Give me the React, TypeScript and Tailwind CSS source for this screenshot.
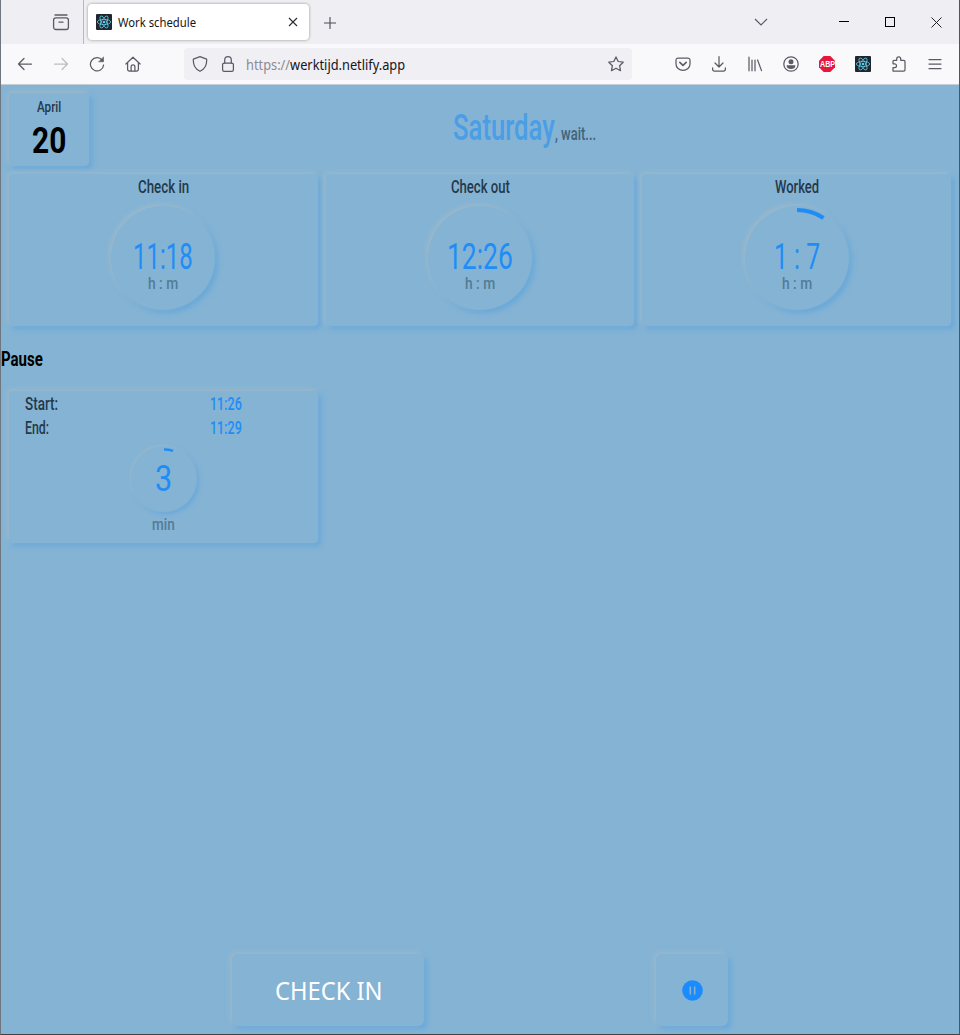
import { useLayoutEffect, useRef, useState } from "react";
import type { ReactNode } from "react";

/** One line of text, condensed or widened so that it fills a fixed width. */
function Fit({ width, className = "", children }: { width: number; className?: string; children: ReactNode }) {
  const ref = useRef<HTMLSpanElement>(null);
  const [scale, setScale] = useState(1);
  useLayoutEffect(() => {
    const fit = () => {
      if (ref.current && ref.current.offsetWidth) setScale(width / ref.current.offsetWidth);
    };
    fit();
    document.fonts?.ready.then(fit);
  }, [width]);
  return (
    <span className={`flex shrink-0 justify-start whitespace-nowrap ${className}`} style={{ width }}>
      <span ref={ref} className="block shrink-0 origin-left whitespace-pre" style={{ transform: `scaleX(${scale})` }}>
        {children}
      </span>
    </span>
  );
}

const soft = "shadow-[-2px_-2px_5px_#9bb9cb,3px_3px_5px_#68a8da]";
const softSmall = "shadow-[-1px_-1px_3px_#9bb9cb,2px_2px_4px_#68a8da]";

function ReactLogo() {
  return (
    <svg width="16" height="16" viewBox="0 0 16 16" className="shrink-0">
      <rect width="16" height="16" rx="1" fill="#20262d" />
      <g fill="none" stroke="#61cbea" strokeWidth="0.8">
        <ellipse cx="8" cy="8" rx="6.7" ry="2.6" />
        <ellipse cx="8" cy="8" rx="6.7" ry="2.6" transform="rotate(60 8 8)" />
        <ellipse cx="8" cy="8" rx="6.7" ry="2.6" transform="rotate(120 8 8)" />
      </g>
      <circle cx="8" cy="8" r="1.3" fill="#61cbea" />
    </svg>
  );
}

function Icon({ children, className = "text-[#5b5b66]" }: { children: ReactNode; className?: string }) {
  return (
    <svg
      width="16"
      height="16"
      viewBox="0 0 16 16"
      fill="none"
      stroke="currentColor"
      strokeWidth="1.25"
      strokeLinecap="round"
      strokeLinejoin="round"
      className={`shrink-0 ${className}`}
    >
      {children}
    </svg>
  );
}

function TabBar() {
  return (
    <div className="flex h-[44px] bg-[#efeef3]">
      <div className="flex w-[83px] items-center justify-end border-r border-[#b9b8bf] pr-[13px]">
        <svg width="18" height="18" viewBox="0 0 18 18" fill="none" stroke="#5b5b66" strokeWidth="1.3" strokeLinecap="round">
          <path d="M3 2h12" />
          <rect x="1.6" y="4.9" width="14.8" height="11.6" rx="2.2" />
          <path d="M7 9.2h4" />
        </svg>
      </div>
      <div className="mt-[4px] ml-[4px] flex h-[36px] w-[221px] items-center rounded-[4px] bg-white pl-[8px] shadow-[0_0_3px_rgba(0,0,0,0.4)]">
        <ReactLogo />
        <Fit width={78} className="mt-[2px] ml-[6px] font-['Noto_Sans'] text-[12px] leading-[16px] text-[#15141a]">
          Work schedule
        </Fit>
        <svg width="10" height="10" viewBox="0 0 10 10" stroke="#2b2a33" strokeWidth="1.1" className="ml-[92px]">
          <path d="M1 1l8 8M9 1L1 9" />
        </svg>
      </div>
      <svg width="12" height="12" viewBox="0 0 12 12" stroke="#4a4a55" strokeWidth="1.1" className="mt-[17px] ml-[15px]">
        <path d="M6 0v12M0 6h12" />
      </svg>
      <div className="ml-auto flex items-center pr-[16px]">
        <svg width="14" height="8" viewBox="0 0 14 8" fill="none" stroke="#5b5b66" strokeWidth="1.2" className="mr-[71px]">
          <path d="M1 1l6 6 6-6" />
        </svg>
        <svg width="10" height="10" viewBox="0 0 10 10" stroke="#000" className="mr-[36px]">
          <path d="M0 4.5h10" />
        </svg>
        <svg width="10" height="10" viewBox="0 0 10 10" fill="none" stroke="#000" className="mr-[36px]">
          <rect x="0.5" y="0.5" width="9" height="9" />
        </svg>
        <svg width="11" height="11" viewBox="0 0 11 11" stroke="#222" strokeWidth="1" className="mr-px">
          <path d="M.5 .5l10 10M10.5 .5l-10 10" />
        </svg>
      </div>
    </div>
  );
}

function ToolBar() {
  return (
    <div className="flex h-[40px] items-center bg-[#f9f9fb] pl-[16px]">
      <div className="flex gap-[20px]">
        <Icon>
          <path d="M14.5 8H1.5M7 2.5L1.5 8 7 13.5" />
        </Icon>
        <Icon className="text-[#bcbcc2]">
          <path d="M1.5 8h13M9 2.5L14.5 8 9 13.5" />
        </Icon>
        <Icon>
          <path d="M13.2 4.2A6.6 6.6 0 1 0 14.6 9" />
          <path d="M14.5 1.2v4.6H9.9z" fill="currentColor" strokeWidth="0.6" />
        </Icon>
        <Icon>
          <path d="M.9 8L8 1.2 15.1 8M2.6 6.6v6.6a1.8 1.8 0 0 0 1.8 1.8h7.2a1.8 1.8 0 0 0 1.8-1.8V6.6" />
          <path d="M6.1 14.8v-4a1.9 1.9 0 0 1 3.8 0v4" />
        </Icon>
      </div>
      <div className="ml-[43px] flex h-[32px] w-[448px] items-center rounded-[4px] bg-[#f0eff4] pl-[8px]">
        <Icon>
          <path d="M8 .7l6.6 2.4c.5 5.6-1.2 9.6-6.6 12.2C2.6 12.7.9 8.7 1.4 3.1z" />
        </Icon>
        <Icon className="ml-[12px] text-[#5b5b66]">
          <rect x="2.6" y="7" width="10.8" height="8.3" rx="1.6" />
          <path d="M4.7 7V4a3.3 3.3 0 0 1 6.6 0v3" />
        </Icon>
        <Fit width={159} className="mt-[2px] ml-[10px] font-['Noto_Sans'] text-[14px] leading-[20px] text-[#15141a]">
          <span className="text-[#8b8b93]">https://</span>werktijd.netlify.app
        </Fit>
        <Icon className="mr-[8px] ml-auto text-[#5b5b66]">
          <path d="M8 .9l2.2 4.6 5 .7-3.6 3.5.9 5L8 12.3l-4.5 2.4.9-5L.8 6.2l5-.7z" />
        </Icon>
      </div>
      <div className="ml-[43px] flex gap-[20px]">
        <Icon>
          <path d="M3.2 2h9.6a2.2 2.2 0 0 1 2.2 2.2V8A7 6.4 0 0 1 1 8V4.2A2.2 2.2 0 0 1 3.2 2z" />
          <path d="M4.8 6.3L8 9.3l3.2-3" strokeWidth="1.6" />
        </Icon>
        <Icon>
          <path d="M8 .7v10M4 7l4 4 4-4M1.600 11.8v1.4a1.8 1.8 0 0 0 1.8 1.8h9.2a1.8 1.8 0 0 0 1.8-1.8v-1.4" />
        </Icon>
        <Icon>
          <path d="M2 1.2v13.600M5 4v10.800M8 4v10.800M10.600 4l3.900 10.600" />
        </Icon>
        <Icon>
          <circle cx="8" cy="8" r="7.2" />
          <circle cx="8" cy="5.8" r="2.5" fill="currentColor" stroke="none" />
          <path d="M3.6 9.200h8.800a4.400 3.800 0 0 1-8.800 0z" fill="currentColor" stroke="none" />
        </Icon>
        <div className="relative h-[16px] w-[16px]">
          <svg width="16" height="16" viewBox="0 0 16 16">
            <path d="M4.700 0h6.600L16 4.700v6.600L11.300 16H4.700L0 11.300V4.700z" fill="#e5173f" />
          </svg>
          <div className="absolute inset-0 flex items-center justify-center">
            <Fit width={15} className="font-['Liberation_Sans'] text-[9px] leading-[9px] font-bold text-white">
              ABP
            </Fit>
          </div>
        </div>
        <ReactLogo />
        <Icon>
          <path d="M2 15V11.600h1.600a1.900 1.900 0 0 0 0-3.800H2V5.400a1 1 0 0 1 1-1h2.700V2.900a2 2 0 0 1 4 0v1.500h3a1.300 1.300 0 0 1 1.300 1.300v8a1.300 1.300 0 0 1-1.300 1.300z" />
        </Icon>
        <Icon>
          <path d="M2 3.500h12M2 8h12M2 12.500h12" />
        </Icon>
      </div>
    </div>
  );
}

function TimeCard({ title, titleWidth, value, valueWidth, arc }: { title: string; titleWidth: number; value: string; valueWidth: number; arc?: boolean }) {
  return (
    <section className={`flex h-[152px] flex-1 flex-col items-center rounded-[4px] ${soft}`}>
      <Fit width={titleWidth} className="mt-px text-[18px] leading-[24px] font-medium text-[#24394a]">
        {title}
      </Fit>
      <div className={`relative mt-[7px] flex h-[104px] w-[104px] flex-col items-center rounded-full ${soft}`}>
        {arc && (
          <svg width="104" height="104" viewBox="0 0 104 104" className="absolute inset-0">
            <path d="M52 4A48 48 0 0 1 78.500 12" fill="none" stroke="#1f8df5" strokeWidth="4" />
          </svg>
        )}
        <Fit width={valueWidth} className="mt-[32px] text-[36px] leading-[38px] text-[#1f8df5]">
          {value}
        </Fit>
        <Fit width={30} className="text-[17px] leading-[14px] font-medium text-[#557b95]">
          h : m
        </Fit>
      </div>
    </section>
  );
}

function PauseRow({ label, width, value }: { label: string; width: number; value: string }) {
  return (
    <div className="flex h-[24px] w-full items-center pl-[16px]">
      <div className="w-[185px]">
        <Fit width={width} className="text-[18px] leading-[24px] font-medium text-[#24394a]">
          {label}
        </Fit>
      </div>
      <Fit width={32} className="text-[18px] leading-[24px] font-medium text-[#1f8df5]">
        {value}
      </Fit>
    </div>
  );
}

export default function App() {
  return (
    <div className="flex h-[1035px] w-[960px] flex-col overflow-hidden border-x border-b border-l-[#6d7780] border-r-[#4d565e] border-b-[#3c4248] bg-[#84b3d4] font-[Roboto,sans-serif]">
      <TabBar />
      <ToolBar />
      <div className="h-px shrink-0 bg-[#c5ced6]" />
      <main className="flex flex-1 flex-col">
        <header className="flex pt-[8px] pl-[8px]">
          <div className={`flex h-[73px] w-[80px] flex-col items-center rounded-[4px] ${soft}`}>
            <Fit width={24} className="mt-[5px] text-[15px] leading-[18px] font-medium text-[#24394a]">
              April
            </Fit>
            <Fit width={34} className="mt-[6px] text-[36px] leading-[38px] font-bold text-black">
              20
            </Fit>
          </div>
          <div className="flex h-[69px] flex-1 items-center pl-[364px]">
            <div className="flex items-baseline">
              <Fit width={102} className="text-[36px] leading-[42px] font-medium text-[#4a9ee6]">
                Saturday
              </Fit>
              <Fit width={41} className="text-[18px] leading-[24px] font-medium text-[#426279]">
                , wait...
              </Fit>
            </div>
          </div>
        </header>
        <div className="mt-[8px] flex gap-[8px] px-[8px]">
          <TimeCard title="Check in" titleWidth={51} value="11:18" valueWidth={60} />
          <TimeCard title="Check out" titleWidth={59} value="12:26" valueWidth={66} />
          <TimeCard title="Worked" titleWidth={44} value="1 : 7" valueWidth={46} arc />
        </div>
        <h3 className="mt-[18px] text-[20px] leading-[30px] font-bold text-black">
          <Fit width={42}>Pause</Fit>
        </h3>
        <section className={`mt-[17px] ml-[8px] flex h-[152px] w-[309px] flex-col items-center rounded-[4px] pt-px ${soft}`}>
          <PauseRow label="Start:" width={33} value="11:26" />
          <PauseRow label="End:" width={24} value="11:29" />
          <div className={`relative mt-[6px] flex h-[66px] w-[66px] items-center justify-center rounded-full ${softSmall}`}>
            <svg width="66" height="66" viewBox="0 0 66 66" className="absolute inset-0">
              <path d="M33 3.500A29.500 29.500 0 0 1 42.100 4.900" fill="none" stroke="#1f8df5" strokeWidth="2.500" />
            </svg>
            <Fit width={17} className="text-[36px] leading-[38px] text-[#1f8df5]">
              3
            </Fit>
          </div>
          <Fit width={23} className="mt-px text-[17px] leading-[22px] font-medium text-[#557b95]">
            min
          </Fit>
        </section>
        <footer className="mt-auto flex pb-[8px] pl-[231px]">
          <button className={`flex h-[72px] w-[192px] items-center justify-center rounded-[6px] ${soft}`}>
            <Fit width={107} className="font-['Noto_Sans'] text-[25px] leading-[34px] text-white">
              CHECK IN
            </Fit>
          </button>
          <button className={`ml-[232px] flex h-[72px] w-[72px] items-center justify-center rounded-[6px] ${soft}`}>
            <svg width="21" height="21" viewBox="0 0 21 21">
              <circle cx="10.500" cy="10.500" r="10.300" fill="#1a8cff" />
              <path d="M8.300 6.500v8M12.700 6.500v8" stroke="#84b3d4" strokeWidth="1.500" />
            </svg>
          </button>
        </footer>
      </main>
    </div>
  );
}
